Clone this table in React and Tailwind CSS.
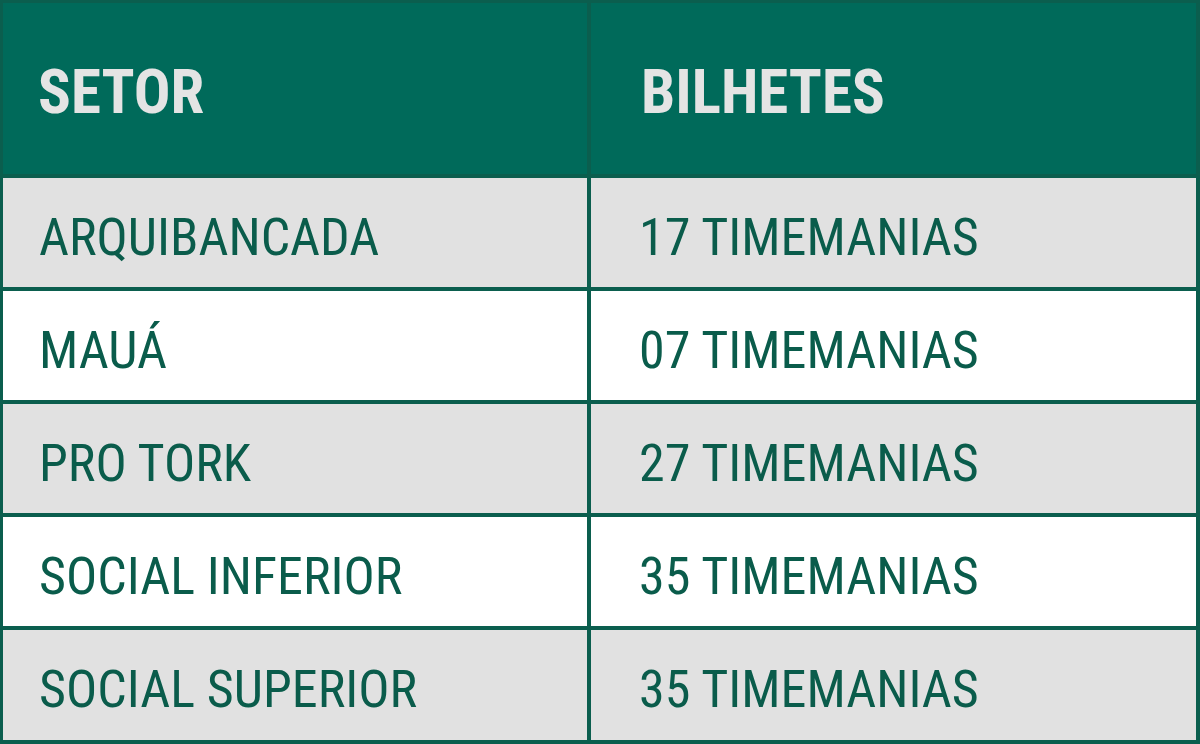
const rows = [
  { setor: 'ARQUIBANCADA', bilhetes: '17 TIMEMANIAS' },
  { setor: 'MAUÁ', bilhetes: '07 TIMEMANIAS' },
  { setor: 'PRO TORK', bilhetes: '27 TIMEMANIAS' },
  { setor: 'SOCIAL INFERIOR', bilhetes: '35 TIMEMANIAS' },
  { setor: 'SOCIAL SUPERIOR', bilhetes: '35 TIMEMANIAS' },
]

const font = { fontFamily: '"Roboto Condensed", "Liberation Sans", sans-serif' }

export default function App() {
  return (
    <div
      style={font}
      className="flex h-[744px] w-[1200px] flex-col border-t-[3px] border-r-[4px] border-b-[4px] border-l-[3px] border-[#0b5e4e]"
    >
      <div className="flex h-[175px] shrink-0 border-b-[4px] border-[#0b5e4e] bg-[#006a5a] text-[#e4e4e4]">
        <div className="flex w-[588px] shrink-0 items-center border-r-[4px] border-[#0b5e4e] pl-[35px] pt-[8px] text-[61px] font-bold">
          SETOR
        </div>
        <div className="flex flex-1 items-center pl-[50px] pt-[8px] text-[61px] font-bold">BILHETES</div>
      </div>
      {rows.map((r, i) => {
        const last = i === rows.length - 1
        return (
          <div
            key={r.setor}
            className={[
              'flex text-[#0a5c4b]',
              last ? 'flex-1' : 'h-[113px] shrink-0 border-b-[4px] border-[#0b5e4e]',
              i % 2 === 0 ? 'bg-[#e1e1e1]' : 'bg-white',
            ].join(' ')}
          >
            <div className="flex w-[588px] shrink-0 items-center border-r-[4px] border-[#0b5e4e] pl-[36px] pt-[10px] text-[52px]">
              {r.setor}
            </div>
            <div className="flex flex-1 items-center pl-[48px] pt-[10px] text-[52px]">{r.bilhetes}</div>
          </div>
        )
      })}
    </div>
  )
}
